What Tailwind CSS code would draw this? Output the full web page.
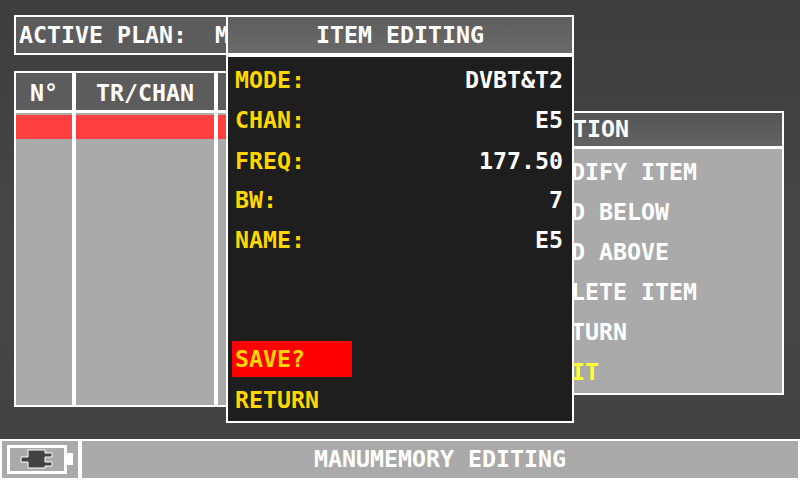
<!DOCTYPE html>
<html lang="en">
<head>
  <meta charset="UTF-8">
  <script src="https://cdn.jsdelivr.net/npm/@tailwindcss/browser@4"></script>
  <title>Manumemory editing</title>
</head>
<body class="m-0">
  <div class="relative w-[800px] h-[480px] overflow-hidden bg-linear-to-b from-[#3e3e3e] via-[#464646] to-[#424242] font-['DejaVu_Sans_Mono',monospace] font-bold text-[23.25px] leading-[28px] text-white">
    <!-- active plan -->
    <div class="absolute left-[14px] top-[15px] w-[300px] h-[40px] border-2 border-white bg-[#5c5c5c] pl-[3px] pt-[4px] whitespace-pre">ACTIVE PLAN:  MANUAL</div>

    <!-- channel table -->
    <div class="absolute left-[14px] top-[71px] w-[300px] h-[336px] border-2 border-white bg-[#aaaaaa] flex">
      <div class="w-[56px] flex flex-col">
        <div class="h-[37px] bg-[#5c5c5c] text-center pt-[6px]">N°</div>
        <div class="h-[3px] bg-white"></div>
        <div class="h-[2px]"></div>
        <div class="h-[24px] bg-[#ff4040]"></div>
      </div>
      <div class="w-[4px] bg-white"></div>
      <div class="w-[138px] flex flex-col">
        <div class="h-[37px] bg-[#5c5c5c] text-center pt-[6px]">TR/CHAN</div>
        <div class="h-[3px] bg-white"></div>
        <div class="h-[2px]"></div>
        <div class="h-[24px] bg-[#ff4040]"></div>
      </div>
      <div class="w-[4px] bg-white"></div>
      <div class="flex-1 flex flex-col">
        <div class="h-[37px] bg-[#5c5c5c]"></div>
        <div class="h-[3px] bg-white"></div>
        <div class="h-[2px]"></div>
        <div class="h-[24px] bg-[#ff4040]"></div>
      </div>
    </div>

    <!-- option menu -->
    <div class="absolute left-[529px] top-[111px] w-[255px] h-[284px] border-2 border-white bg-[#aaaaaa] flex flex-col">
      <div class="h-[33px] bg-linear-to-b from-[#555555] to-[#636363] pl-[14px] pt-[2px]">OPTION</div>
      <div class="h-[3px] bg-white"></div>
      <div class="flex flex-col gap-[12px] pl-[12px] pt-[9px]">
        <div>MODIFY ITEM</div>
        <div>ADD BELOW</div>
        <div>ADD ABOVE</div>
        <div>DELETE ITEM</div>
        <div>RETURN</div>
        <div class="text-[#ffff33]">EXIT</div>
      </div>
    </div>

    <!-- item editing dialog -->
    <div class="absolute left-[226px] top-[15px] w-[348px] h-[408px] border-2 border-white bg-[#1e1e1e] flex flex-col text-[#ffd700]">
      <div class="h-[36px] bg-linear-to-b from-[#5e5e5e] to-[#6a6a6a] text-white text-center pt-[4px] shrink-0">ITEM EDITING</div>
      <div class="h-[4px] bg-white shrink-0"></div>
      <div class="flex flex-col pl-[7px] pr-[9px] pt-[9px] gap-[12px]">
        <div class="flex justify-between"><span>MODE:</span><span class="text-white">DVBT&amp;T2</span></div>
        <div class="flex justify-between"><span>CHAN:</span><span class="text-white">E5</span></div>
        <div class="flex justify-between mt-[1px] mb-[-1px]"><span>FREQ:</span><span class="text-white">177.50</span></div>
        <div class="flex justify-between"><span>BW:</span><span class="text-white">7</span></div>
        <div class="flex justify-between"><span>NAME:</span><span class="text-white">E5</span></div>
      </div>
      <div class="mt-auto flex flex-col pl-[4px] pb-[7px]">
        <div class="w-[120px] h-[36px] bg-[#ff0000] pl-[3px] pt-[4px]">SAVE?</div>
        <div class="pl-[3px] pt-[9px]">RETURN</div>
      </div>
    </div>

    <!-- status bar -->
    <div class="absolute left-0 bottom-0 w-[800px] h-[41px] border-2 border-white bg-[#aaaaaa] flex">
      <div class="w-[76px] pl-[5px] pt-[2px]">
        <svg width="68" height="34" viewBox="0 0 68 34" class="block">
          <rect x="1.5" y="3.5" width="57" height="26" fill="none" stroke="#fff" stroke-width="3"/>
          <rect x="60" y="10" width="6" height="12" fill="#fff"/>
          <path d="M14 14H21V7H38V10H45V14H38V19H45V23H38V25H21V19H14Z" fill="#424242" stroke="#fff" stroke-width="1"/>
        </svg>
      </div>
      <div class="w-[4px] bg-white"></div>
      <div class="flex-1 text-center pt-[4px]">MANUMEMORY EDITING</div>
    </div>
  </div>
</body>
</html>
